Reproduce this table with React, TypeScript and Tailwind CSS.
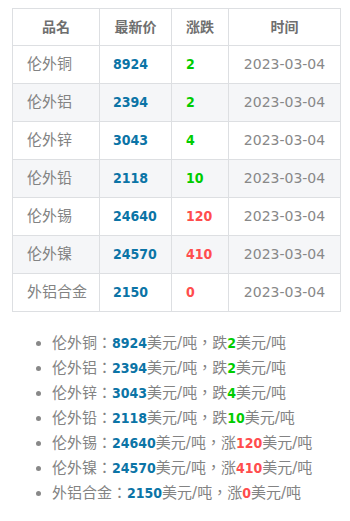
import React from 'react';

type Row = { name: string; price: string; change: string; up: boolean };

const rows: Row[] = [
  { name: '伦外铜', price: '8924', change: '2', up: false },
  { name: '伦外铝', price: '2394', change: '2', up: false },
  { name: '伦外锌', price: '3043', change: '4', up: false },
  { name: '伦外铅', price: '2118', change: '10', up: false },
  { name: '伦外锡', price: '24640', change: '120', up: true },
  { name: '伦外镍', price: '24570', change: '410', up: true },
  { name: '外铝合金', price: '2150', change: '0', up: true },
];

const num = "font-bold [font-family:'DejaVu_Sans_Condensed','DejaVu_Sans',sans-serif] [font-stretch:condensed]";

export default function App() {
  return (
    <div className="bg-white min-h-[521px] pt-2 text-[14px] text-[#838383] [font-family:'DejaVu_Sans','Noto_Sans_CJK_TC',sans-serif]">
      <table className="ml-3 w-[328px] border-collapse table-fixed">
        <colgroup>
          <col className="w-[87px]" />
          <col className="w-[72px]" />
          <col className="w-[57px]" />
          <col className="w-[112px]" />
        </colgroup>
        <thead>
          <tr className="h-[37px]">
            {['品名', '最新价', '涨跌', '时间'].map((h) => (
              <th key={h} className="border border-[#dddfe2] text-center font-bold text-[#6f6f6f] p-0">
                {h}
              </th>
            ))}
          </tr>
        </thead>
        <tbody>
          {rows.map((r, i) => (
            <tr key={r.name} className={`h-[38px] ${i % 2 === 1 ? 'bg-[#f5f6f8]' : 'bg-white'}`}>
              <td className="border border-[#dddfe2] pl-[14px] p-0 text-[15px]">{r.name}</td>
              <td className={`border border-[#dddfe2] pl-[13px] p-0 text-[#0b74a6] ${num}`}>{r.price}</td>
              <td className={`border border-[#dddfe2] pl-[14px] p-0 ${num} ${r.up ? 'text-[#ff4d4d]' : 'text-[#00cc00]'}`}>
                {r.change}
              </td>
              <td className="border border-[#dddfe2] text-center p-0 text-[#888]">2023-03-04</td>
            </tr>
          ))}
        </tbody>
      </table>

      <ul className="mt-[19px] pl-[52px] list-disc marker:text-[#888] leading-[25px] text-[15px]">
        {rows.map((r) => (
          <li key={r.name}>
            {r.name}：<span className={`text-[#0b74a6] text-[14px] ${num}`}>{r.price}</span>美元/吨，
            {r.up ? '涨' : '跌'}
            <span className={`text-[14px] ${num} ${r.up ? 'text-[#ff4d4d]' : 'text-[#00cc00]'}`}>{r.change}</span>
            美元/吨
          </li>
        ))}
      </ul>
    </div>
  );
}
